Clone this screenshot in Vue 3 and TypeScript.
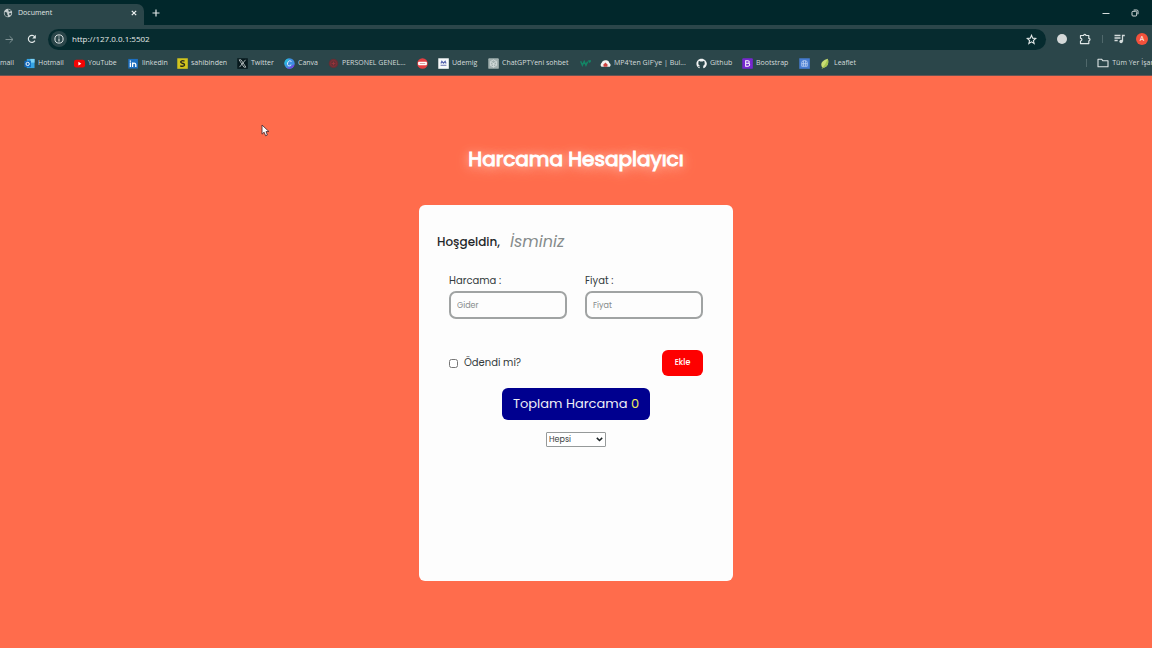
<script setup lang="ts">
import { ref } from 'vue'

interface Bookmark {
  icon: string
  label: string
}

const bookmarks: Bookmark[] = [
  { icon: 'hotmail', label: 'Hotmail' },
  { icon: 'youtube', label: 'YouTube' },
  { icon: 'linkedin', label: 'linkedin' },
  { icon: 'sahibinden', label: 'sahibinden' },
  { icon: 'twitter', label: 'Twitter' },
  { icon: 'canva', label: 'Canva' },
  { icon: 'personel', label: 'PERSONEL GENEL...' },
  { icon: 'stop', label: '' },
  { icon: 'udemig', label: 'Udemig' },
  { icon: 'chat', label: 'ChatGPTYeni sohbet' },
  { icon: 'w3', label: '' },
  { icon: 'cloud', label: "MP4'ten GIF'ye | Bul..." },
  { icon: 'github', label: 'Github' },
  { icon: 'bootstrap', label: 'Bootstrap' },
  { icon: 'blue', label: '' },
  { icon: 'leaflet', label: 'Leaflet' },
]

const url = ref('http://127.0.0.1:5502')
const userName = ref('')
const expense = ref('')
const price = ref('')
const paid = ref(false)
const filter = ref('hepsi')
const total = ref(0)

function addExpense(): void {
  const amount = Number(price.value)
  if (!expense.value || !amount) return
  total.value += amount
  expense.value = ''
  price.value = ''
  paid.value = false
}
</script>

<template>
  <div class="window">
    <header class="browser">
      <div class="tabstrip">
        <div class="tab">
          <svg class="globe" viewBox="0 0 12 12" aria-hidden="true">
            <circle cx="6" cy="6" r="5" fill="#c4cccd" />
            <path d="M2 4.5 5.2 5.6 4.8 7.6 6 8.4 5.4 10.4C3 10 1.5 8 2 4.5ZM6.2 1.6 9.4 2.8 8.6 4.6 6.8 4.2ZM7.6 6 10.2 6.4 8.6 9 7.4 7.8Z" fill="#2b4549" />
          </svg>
          <span class="tab-title">Document</span>
          <button class="bare" aria-label="Close tab">
            <svg width="6" height="6" viewBox="0 0 6 6"><path d="M.8.8l4.4 4.4M5.2.8.8 5.2" stroke="#eef2f2" stroke-width="1.2" /></svg>
          </button>
        </div>
        <button class="bare new-tab" aria-label="New tab">
          <svg width="8" height="8" viewBox="0 0 8 8"><path d="M4 .5v7M.5 4h7" stroke="#e2e8e8" stroke-width="1.2" /></svg>
        </button>
        <div class="window-controls">
          <button class="bare" aria-label="Minimize">
            <svg width="8" height="8" viewBox="0 0 8 8"><path d="M.5 4.5h7" stroke="#d5dcdc" /></svg>
          </button>
          <button class="bare" aria-label="Restore">
            <svg width="8" height="8" viewBox="0 0 8 8" fill="none" stroke="#d5dcdc"><rect x="1" y="2.3" width="4.7" height="4.7" rx="1" /><path d="M2.7 1H5.8Q7 1 7 2.2V5.2" /></svg>
          </button>
        </div>
      </div>

      <div class="toolbar">
        <button class="bare forward" aria-label="Forward">
          <svg width="9" height="9" viewBox="0 0 9 9" fill="none" stroke="#7f9294"><path d="M.5 4.5h7.5M4.6 1.2 8 4.5 4.6 7.8" /></svg>
        </button>
        <button class="bare reload" aria-label="Reload">
          <svg width="10" height="10" viewBox="0 0 10 10"><path d="M7.9 6.6A3.5 3.5 0 1 1 7.7 2.8" fill="none" stroke="#e2e8e8" stroke-width="1.2" /><path d="M8.8.8v3.6H5.2Z" fill="#e2e8e8" /></svg>
        </button>
        <div class="address">
          <span class="info">
            <svg width="10" height="10" viewBox="0 0 10 10" aria-hidden="true"><circle cx="5" cy="5" r="4.1" fill="none" stroke="#dfe6e6" /><path d="M5 4.4v3M5 2.5v1.1" stroke="#dfe6e6" stroke-width="1.1" /></svg>
          </span>
          <input v-model="url" class="url" type="text" aria-label="Address" />
          <button class="bare" aria-label="Bookmark this page">
            <svg width="11" height="11" viewBox="0 0 12 12"><path d="M6 1.4 7.3 4.5 10.7 4.8 8.1 7.1 8.9 10.4 6 8.6 3.1 10.4 3.9 7.1 1.3 4.8 4.7 4.5Z" fill="none" stroke="#dfe6e6" stroke-width="1.2" /></svg>
          </button>
        </div>
        <div class="extensions">
          <button class="bare" aria-label="Extension">
            <svg width="12" height="12" viewBox="0 0 12 12"><circle cx="6" cy="6" r="5" fill="#d5d9d9" /></svg>
          </button>
          <button class="bare" aria-label="Extensions">
            <svg width="12" height="12" viewBox="0 0 12 12"><path d="M1.5 2.5H4.6Q4.7 1.3 5.8 1.3T7 2.5H9.8V5.4Q11 5.5 11 6.6T9.8 7.8V10.6H1.5V8Q2.9 7.8 2.9 6.6T1.5 5.2Z" fill="none" stroke="#dfe6e6" stroke-width="1.2" stroke-linejoin="round" /></svg>
          </button>
          <span class="divider"></span>
          <button class="bare" aria-label="Media controls">
            <svg width="11" height="10" viewBox="0 0 11 10"><path d="M.5 1.5h6M.5 4h6M.5 6.5h3.2M8.5 7.5v-6h2.3" fill="none" stroke="#d5dcdc" stroke-width="1.3" /><circle cx="7.1" cy="7.5" r="1.7" fill="#d5dcdc" /></svg>
          </button>
          <button class="avatar" aria-label="Profile">A</button>
        </div>
      </div>

      <nav class="bookmarks" aria-label="Bookmarks">
        <a class="bookmark" href="#"><span>mail</span></a>
        <a v-for="item in bookmarks" :key="item.icon" class="bookmark" href="#" :aria-label="item.label || item.icon">
          <svg class="favicon" viewBox="0 0 12 12" aria-hidden="true">
            <g v-if="item.icon === 'hotmail'">
              <path d="M3 1H11.5V11H3Z" fill="#35a4e4" /><path d="M7 1h4.5v4H7Z" fill="#7bd0f5" /><rect x="0.5" y="3" width="7" height="7" fill="#1169bd" /><circle cx="4" cy="6.5" r="1.8" fill="none" stroke="#fff" />
            </g>
            <g v-else-if="item.icon === 'youtube'">
              <rect y="2" width="12" height="8.4" rx="2.4" fill="#f40404" /><path d="M4.8 4.2 8 6.2 4.8 8.2Z" fill="#fff" />
            </g>
            <g v-else-if="item.icon === 'linkedin'">
              <rect x=".3" y="1" width="10.5" height="10.5" fill="#1d6fc0" /><path d="M2.6 5v4.8M2.6 2.6V4M5 9.8V5M5 7Q5.2 5.5 6.7 5.5T8.5 7.2V9.8" fill="none" stroke="#fff" stroke-width="1.4" />
            </g>
            <g v-else-if="item.icon === 'sahibinden'">
              <rect x=".3" y=".3" width="11.5" height="11.5" fill="#d1c41d" /><path d="M8.2 3.4Q6.2 2.5 4.7 3.3C3.4 4 4 5.3 5.8 5.7C8.4 6.2 8.7 7.5 7.6 8.5Q6 9.6 3.5 8.5" fill="none" stroke="#28291c" stroke-width="1.5" />
            </g>
            <g v-else-if="item.icon === 'twitter'">
              <rect x=".3" y=".3" width="11.5" height="11.5" fill="#07191d" /><path d="M2.3 2h2.1l5.3 8H7.6ZM9.3 2 2.7 10" fill="none" stroke="#c4cccc" stroke-width=".9" />
            </g>
            <g v-else-if="item.icon === 'canva'">
              <circle cx="6" cy="6" r="5.6" fill="#3f8fe2" /><path d="M.5 6A5.5 5.5 0 0 1 5 .5Q6 3 3 6T3.2 10.8A5.5 5.5 0 0 1 .5 6Z" fill="#2bb6dc" /><path d="M3 10.8A5.6 5.6 0 0 0 11.5 6.5Q8 10 3 10.8Z" fill="#7446dc" /><path d="M8 4.2Q7.6 2.8 6.1 3C3.8 3.5 3 7.3 4.5 8.4Q6 9.2 7.9 7.4" fill="none" stroke="#e9f3ff" />
            </g>
            <g v-else-if="item.icon === 'personel'">
              <circle cx="6" cy="6" r="5.2" fill="#622f35" /><circle cx="6" cy="6" r="3.4" fill="none" stroke="#842e37" /><path d="M4 6h4M6 4v4" stroke="#97343b" />
            </g>
            <g v-else-if="item.icon === 'stop'">
              <circle cx="6" cy="6" r="5.7" fill="#e43e42" /><rect x="1.2" y="4.1" width="9.6" height="3.8" rx="1" fill="#fff" /><path d="M3 6h6" stroke="#d59a99" />
            </g>
            <g v-else-if="item.icon === 'udemig'">
              <rect x=".3" y=".3" width="11.5" height="11.5" fill="#f7f9fa" /><path d="M3.2 6 4.2 3.6 6 5.6 7.8 3.6 8.8 6" fill="none" stroke="#5462ad" stroke-width="1.2" /><path d="M2.8 8h6.4" stroke="#8a92c0" stroke-width="1.4" />
            </g>
            <g v-else-if="item.icon === 'chat'">
              <rect x=".3" y=".3" width="11.5" height="11.5" rx="1" fill="#a3b2b1" /><path d="M6 2 9.3 4V8L6 10 2.7 8V4ZM3 4l3 2 3-2M6 6v4M3 8l3-2 3 2" fill="none" stroke="#dce3e2" stroke-width=".8" />
            </g>
            <g v-else-if="item.icon === 'w3'">
              <path d="M.7 3.5 2.6 8 4.6 3.8 6.5 8 8.3 4M9 3.2h2.2L10.1 5" fill="none" stroke="#138565" stroke-width="1.6" />
            </g>
            <g v-else-if="item.icon === 'cloud'">
              <path d="M1.7 9.5Q-.2 8 1.4 5.8Q3 1.8 6.4 2.5Q9.5 2 10.3 5.4Q12.6 7.5 10.8 9.5Z" fill="#f2f2f1" /><path d="M4 9.5V7.8H3L6 5 9 7.8H8v1.7Z" fill="#cb4341" />
            </g>
            <g v-else-if="item.icon === 'github'">
              <path d="M4.2 11.3C-.8 9.8-.8 2.6 4.2 1 9.2-.7 14 5.2 10.8 9.3Q9.7 10.8 7.9 11.3V8.5Q9.7 8.2 9.5 5.6L9 3.1 7.2 3.7H4.8L3 3.1 2.5 5.6Q2.5 8.2 4.3 8.5L3.8 9.4 2.2 8.6Q2.8 10.4 4.2 10Z" fill="#f2f4f4" />
            </g>
            <g v-else-if="item.icon === 'bootstrap'">
              <rect x=".3" y=".3" width="11.5" height="11.5" rx="1" fill="#7627cf" /><path d="M4 3h2.3Q8 3 8 4.4T6.3 5.8H4.2H6.7Q8.5 6 8.4 7.4T6.5 9H4Z" fill="none" stroke="#fff" stroke-width="1.1" />
            </g>
            <g v-else-if="item.icon === 'blue'">
              <rect x=".3" y=".3" width="11.5" height="11.5" fill="#467cd1" /><path d="M3 9V5Q3 2.8 6 2.8T9 5V9ZM3 6.2h6M5 3v6M7.2 3v6" fill="none" stroke="#b9d0f3" stroke-width=".9" />
            </g>
            <g v-else>
              <path d="M8.5.8C1.5 2.5-.3 7 2.8 10.7C7.7 10.5 10.2 6 8.5.8Z" fill="#c9dd74" /><path d="M2.8 10.7Q6 7 8.5.8C10.2 6 7.7 10.5 2.8 10.7Z" fill="#a5c552" /><path d="M3 10.4 2.2 12" stroke="#819d48" />
            </g>
          </svg>
          <span v-if="item.label">{{ item.label }}</span>
        </a>
        <div class="all-bookmarks">
          <span class="divider"></span>
          <a class="bookmark folder" href="#">
            <svg width="12" height="10" viewBox="0 0 12 10" aria-hidden="true"><path d="M1 1.2h3.5L5.8 2.7H11v6H1Z" fill="none" stroke="#dfe6e6" stroke-width="1.1" stroke-linejoin="round" /></svg>
            <span>Tüm Yer İşaretleri</span>
          </a>
        </div>
      </nav>
    </header>

    <main class="page">
      <svg class="cursor" viewBox="0 0 9 13" aria-hidden="true"><path d="M1 1v9.2l2.1-2 1.5 3.6 1.8-.8L5 7.6h3Z" fill="#fff" stroke="#4c3037" stroke-width=".9" /></svg>
      <h1>Harcama Hesaplayıcı</h1>
      <section class="card">
        <div class="greeting">
          <label for="user-name">Hoşgeldin,</label>
          <input id="user-name" v-model="userName" type="text" placeholder="İsminiz" />
        </div>
        <form class="form" @submit.prevent="addExpense">
          <div class="fields">
            <div class="field">
              <label for="expense">Harcama :</label>
              <input id="expense" v-model="expense" type="text" placeholder="Gider" />
            </div>
            <div class="field">
              <label for="price">Fiyat :</label>
              <input id="price" v-model="price" type="text" inputmode="decimal" placeholder="Fiyat" />
            </div>
          </div>
          <div class="actions">
            <label class="paid"><input v-model="paid" type="checkbox" />Ödendi mi?</label>
            <button class="add" type="submit">Ekle</button>
          </div>
        </form>
        <p class="total">Toplam Harcama <span>{{ total }}</span></p>
        <div class="filter">
          <select v-model="filter" aria-label="Filtre">
            <option value="hepsi">Hepsi</option>
            <option value="odenen">Ödenenler</option>
          </select>
          <svg class="chevron" viewBox="0 0 7 5" aria-hidden="true"><path d="M.8.9 3.5 3.5 6.2.9" fill="none" stroke="#1c2426" stroke-width="1.5" /></svg>
        </div>
      </section>
    </main>
  </div>
</template>

<style>
body {
  background: #ff6c4c;
}
</style>

<style scoped>
* {
  box-sizing: border-box;
}

.window {
  display: flex;
  flex-direction: column;
  min-height: 100vh;
  overflow: hidden;
  font-family: Poppins, Inter, "Open Sans", sans-serif;
}

.browser {
  background: #2b464a;
  border-bottom: 1px solid #6b5352;
  color: #e0e6e6;
  font-family: "Segoe UI", "Open Sans", sans-serif;
  font-size: 7px;
  line-height: 12px;
}

.bare {
  display: flex;
  align-items: center;
  justify-content: center;
  padding: 0;
  border: 0;
  background: none;
}

.tabstrip {
  display: flex;
  align-items: center;
  height: 25px;
  background: #01272b;
}

.tab {
  display: flex;
  align-items: center;
  align-self: flex-end;
  gap: 5px;
  width: 144px;
  height: 21px;
  padding: 0 7px 3px 3px;
  border-radius: 0 7px 0 0;
  background: #2b464a;
}

.globe {
  width: 10px;
  height: 10px;
}

.tab-title {
  flex: 1;
}

.new-tab {
  margin-left: 8px;
}

.window-controls {
  display: flex;
  gap: 21px;
  margin-left: auto;
  padding-right: 13px;
}

.toolbar {
  display: flex;
  align-items: center;
  height: 28px;
  padding: 0 4px 0 5px;
}

.reload {
  margin: 0 11px 0 13px;
}

.address {
  display: flex;
  flex: 1;
  align-items: center;
  height: 21px;
  padding: 0 9px 0 3px;
  border-radius: 11px;
  background: #062b2f;
}

.info {
  display: grid;
  place-items: center;
  width: 16px;
  height: 16px;
  border-radius: 50%;
  background: #2b464a;
}

.url {
  flex: 1;
  height: 16px;
  padding: 0 5px;
  border: 0;
  outline: 0;
  background: none;
  color: #e6ebeb;
  font: 8px/16px "Segoe UI", "Open Sans", sans-serif;
}

.extensions {
  display: flex;
  align-items: center;
  gap: 11px;
  padding-left: 10px;
}

.divider {
  width: 1px;
  height: 8px;
  background: #50686b;
}

.avatar {
  width: 12px;
  height: 12px;
  padding: 0;
  border: 0;
  border-radius: 50%;
  background: #f4513b;
  color: #fff;
  font: 7px/12px "Open Sans", sans-serif;
}

.bookmarks {
  display: grid;
  grid-template-columns: 24px 50px 54px 49px 60px 47px 44px 89px 21px 50px 92px 20px 96px 46px 57px 21px 50px 1fr;
  align-items: center;
  height: 22px;
  padding-top: 1px;
  padding-bottom: 3px;
}

.bookmark {
  display: flex;
  align-items: center;
  gap: 3px;
  color: #d6dddd;
  text-decoration: none;
  white-space: nowrap;
}

.favicon {
  flex: none;
  width: 11px;
  height: 11px;
}

.all-bookmarks {
  display: flex;
  align-items: center;
  justify-content: flex-end;
  gap: 10px;
  min-width: 0;
  margin-right: -18px;
}

.page {
  position: relative;
  display: flex;
  flex: 1;
  flex-direction: column;
  align-items: center;
  padding: 67px 16px;
  background: #ff6c4c;
}

.cursor {
  position: absolute;
  top: 48px;
  left: 261px;
  width: 9px;
  height: 13px;
}

h1 {
  margin: 0;
  color: #fff;
  font-size: 20px;
  font-weight: 400;
  line-height: 32px;
  text-shadow: 0 0 10px #ffc9bb, 0 3px 14px #ffb8a6;
  -webkit-text-stroke: 1px #fff;
}

.card {
  display: flex;
  flex-direction: column;
  align-items: center;
  width: 100%;
  max-width: 314px;
  min-height: 376px;
  margin-top: 30px;
  padding: 25px 18px;
  border-radius: 6px;
  background: #fdfdfd;
  color: #333b3c;
}

.greeting {
  display: flex;
  align-items: center;
  gap: 10px;
  width: 100%;
  height: 24px;
}

.greeting label {
  color: #1f2729;
  font-size: 12px;
  font-weight: 500;
}

.greeting input {
  flex: 1;
  min-width: 0;
  padding: 0;
  border: 0;
  outline: 0;
  background: none;
  color: #333b3c;
  font: italic 16px/24px Poppins, Inter, sans-serif;
}

input::placeholder {
  color: #858b8b;
  opacity: 1;
}

.form {
  width: 100%;
  padding: 19px 12px 0;
}

.fields {
  display: grid;
  grid-template-columns: 1fr 1fr;
  gap: 18px;
}

.field {
  display: flex;
  flex-direction: column;
  gap: 2px;
  font-size: 10px;
  line-height: 16px;
}

.field input {
  width: 100%;
  height: 28px;
  padding: 1px 6px 0;
  border: 2px solid #a0a3a3;
  border-radius: 7px;
  outline: 0;
  background: #fdfdfd;
  color: #333b3c;
  font: 8px/16px Poppins, Inter, sans-serif;
}

.actions {
  display: flex;
  align-items: center;
  justify-content: space-between;
  margin-top: 31px;
}

.paid {
  display: flex;
  align-items: center;
  gap: 6px;
  font-size: 10px;
  line-height: 16px;
}

.paid input {
  width: 9px;
  height: 9px;
  margin: 0;
}

.add {
  width: 41px;
  height: 26px;
  padding: 0;
  border: 0;
  border-radius: 6px;
  background: #fe0000;
  color: #fff;
  font: 500 8px/16px Poppins, Inter, sans-serif;
}

.total {
  margin: 12px 0;
  padding: 6px 11px;
  border-radius: 6px;
  background: #00008f;
  color: #eeeef6;
  font-size: 13px;
  line-height: 20px;
}

.total span {
  color: #eef05a;
}

.filter {
  position: relative;
  width: 60px;
  height: 15px;
}

.filter select {
  display: block;
  width: 100%;
  height: 100%;
  padding: 0 12px 0 2px;
  border: 1px solid #969a9a;
  border-radius: 1px;
  background: #fff;
  color: #3a4142;
  font: 8px/13px Poppins, Inter, sans-serif;
  appearance: none;
}

.chevron {
  position: absolute;
  top: 5px;
  right: 3px;
  width: 7px;
  height: 5px;
  pointer-events: none;
}
</style>
